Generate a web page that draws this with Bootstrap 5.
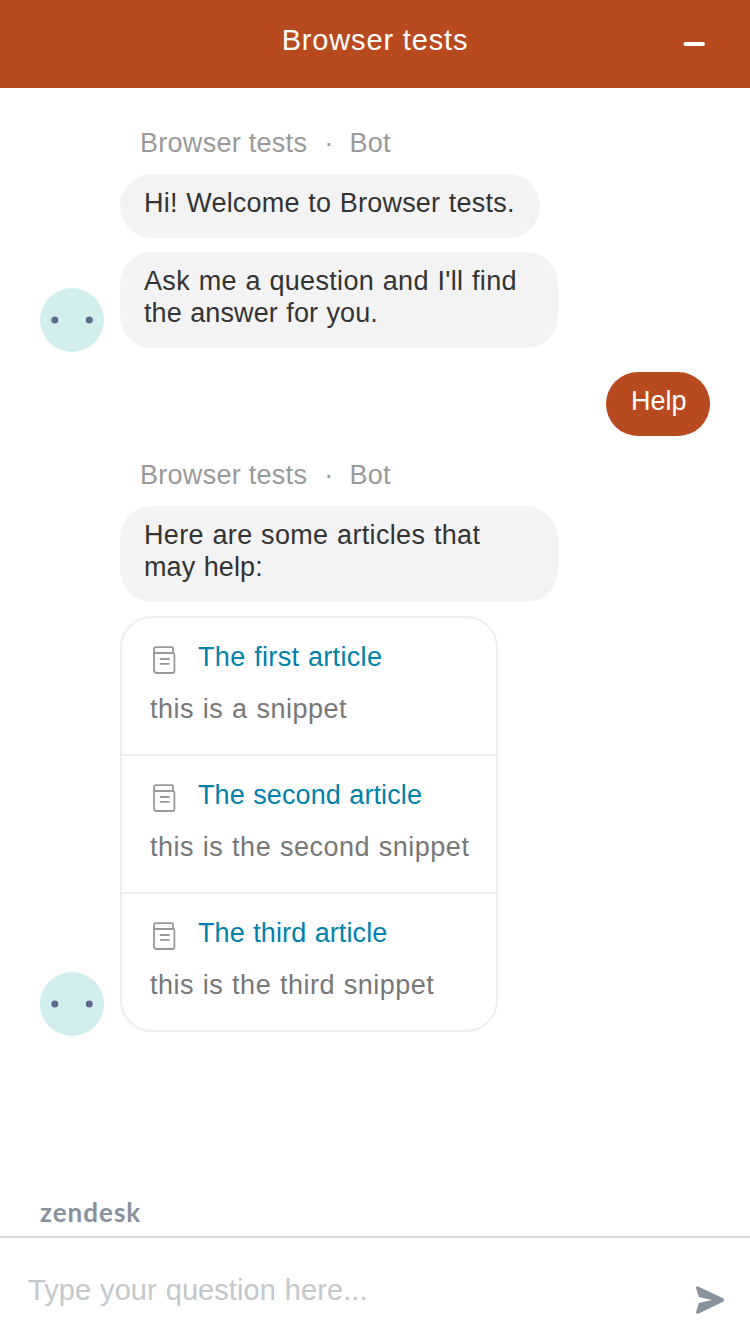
<!DOCTYPE html>
<html lang="en">
<head>
<meta charset="utf-8">
<meta name="viewport" content="width=device-width, initial-scale=1">
<title>Browser tests</title>
<link href="https://cdn.jsdelivr.net/npm/bootstrap@5.3.0/dist/css/bootstrap.min.css" rel="stylesheet">
<style>
  body { font-family: "Liberation Sans", Arial, sans-serif; font-size: 27px; line-height: 32px; letter-spacing: .22px; word-spacing: .8px; color: #333; background: #fff; }
  .widget-head { height: 88px; background: #b84a1f; color: #fff; }
  .widget-title { font-size: 29px; line-height: 36px; letter-spacing: .85px; word-spacing: 0; margin-top: 22px; }
  .minimize { right: 36px; top: 24px; width: 40px; height: 40px; }
  .chat-log { padding: 38px 40px 0; }
  .sender { color: #999; height: 34px; margin: 0 0 14px 100px; padding-top: 1px; letter-spacing: .28px; word-spacing: 0; }
  .sender-dot { margin: 0 16px 0 17px; }
  .sender-next { margin-top: 22px; }
  .bot-row { gap: 16px; }
  .bubble-stack { gap: 14px; }
  .avatar { width: 64px; height: 64px; margin-bottom: -4px; }
  .bubble { background: #f3f3f3; border-radius: 32px; padding: 13px 24px 19px; }
  .bubble-greeting { width: 420px; white-space: nowrap; }
  .bubble-wide { width: 438px; }
  .user-row { margin-top: 24px; }
  .bubble-user { background: #b84a1f; color: #fff; width: 104px; padding-left: 25px; letter-spacing: 0; }
  .line-tight { letter-spacing: .1px; }
  .line-loose { letter-spacing: .33px; }
  .articles { width: 378px; border: 2px solid #eee; border-radius: 32px; }
  .article-item { height: 138px; padding: 23px 28px 0; }
  .article-item:first-child { height: 136px; }
  .article-item + .article-item { border-top: 2px solid #eee; }
  .article-link { color: #0081ab; }
  .snippet { color: #777; margin-top: 17px; white-space: nowrap; letter-spacing: .5px; }
  .doc-icon { width: 28px; height: 32px; margin-right: 20px; margin-top: 3px; }
  .brand-line { font-family: Lato, sans-serif; font-weight: 700; font-size: 26px; color: #87929d; padding-left: 40px; height: 40px; letter-spacing: 1px; }
  .composer { height: 98px; border-top: 2px solid #d8dcde; padding: 34px 24px 0 28px; }
  .composer-text { color: #c2c8cc; font-size: 29px; line-height: 36px; letter-spacing: .07px; }
  .send-icon { margin-top: 12px; }
</style>
</head>
<body>
<svg class="d-none" aria-hidden="true">
  <symbol id="doc" viewBox="0 0 28 32"><g fill="none" stroke="#999" stroke-width="1.8" stroke-linecap="round" stroke-linejoin="round"><path d="M4 6.500V5.500Q4 3.200 6.300 3.200H21.700Q23 3.200 23 4.500V9H6Q4 9 4 6.500V26Q4 29 7 29H22.500Q24.400 29 24.400 27V10.500Q24.400 9 23 9"/><path d="M10.500 15H19M10.500 19.800H19"/></g></symbol>
  <symbol id="face" viewBox="0 0 64 64"><circle cx="32" cy="32" r="32" fill="#d1eeec"/><g fill="#61688c"><circle cx="14.8" cy="32" r="3.500"/><circle cx="49.300" cy="32" r="3.500"/></g></symbol>
</svg>
<div class="d-flex flex-column vh-100 overflow-hidden">
  <header class="widget-head position-relative d-flex justify-content-center align-items-start flex-shrink-0">
    <h1 class="widget-title fw-normal mb-0">Browser tests</h1>
    <svg class="minimize position-absolute" viewBox="0 0 40 40" aria-label="Minimize"><path d="M11.500 20H29" stroke="#fff" stroke-width="4" stroke-linecap="round"/></svg>
  </header>
  <main class="chat-log flex-grow-1">
    <div class="sender">Browser tests<span class="sender-dot d-inline-block">·</span>Bot</div>
    <div class="d-flex align-items-end bot-row">
      <svg class="avatar flex-shrink-0"><use href="#face"/></svg>
      <div class="bubble-stack d-flex flex-column align-items-start">
        <div class="bubble bubble-greeting">Hi! Welcome to Browser tests.</div>
        <div class="bubble bubble-wide"><span class="line-loose">Ask me a question and I'll find</span><br><span class="line-tight">the answer for you.</span></div>
      </div>
    </div>
    <div class="user-row d-flex justify-content-end"><div class="bubble bubble-user">Help</div></div>
    <div class="sender sender-next">Browser tests<span class="sender-dot d-inline-block">·</span>Bot</div>
    <div class="d-flex align-items-end bot-row">
      <svg class="avatar flex-shrink-0"><use href="#face"/></svg>
      <div class="bubble-stack d-flex flex-column align-items-start">
        <div class="bubble bubble-wide"><span class="line-loose">Here are some articles that</span><br><span class="line-tight">may help:</span></div>
        <div class="articles">
          <div class="article-item"><div class="d-flex article-link"><svg class="doc-icon"><use href="#doc"/></svg><span class="line-loose">The first article</span></div><div class="snippet">this is a snippet</div></div>
          <div class="article-item"><div class="d-flex article-link"><svg class="doc-icon"><use href="#doc"/></svg><span class="line-tight">The second article</span></div><div class="snippet">this is the second snippet</div></div>
          <div class="article-item"><div class="d-flex article-link"><svg class="doc-icon"><use href="#doc"/></svg><span class="line-tight">The third article</span></div><div class="snippet">this is the third snippet</div></div>
        </div>
      </div>
    </div>
  </main>
  <div class="brand-line flex-shrink-0">zendesk</div>
  <footer class="composer d-flex justify-content-between align-items-start flex-shrink-0">
    <span class="composer-text">Type your question here...</span>
    <svg class="send-icon" width="32" height="32" viewBox="0 0 32 32"><path fill="#87929d" d="M4.200 2.400 29.500 14.600Q30.800 16 29.500 17.400L4.200 29.700Q1.800 30.300 2 28L5 19 18 16 5 13 2 4Q1.800 1.700 4.200 2.400Z"/></svg>
  </footer>
</div>
<script src="https://cdn.jsdelivr.net/npm/bootstrap@5.3.0/dist/js/bootstrap.bundle.min.js"></script>
</body>
</html>
